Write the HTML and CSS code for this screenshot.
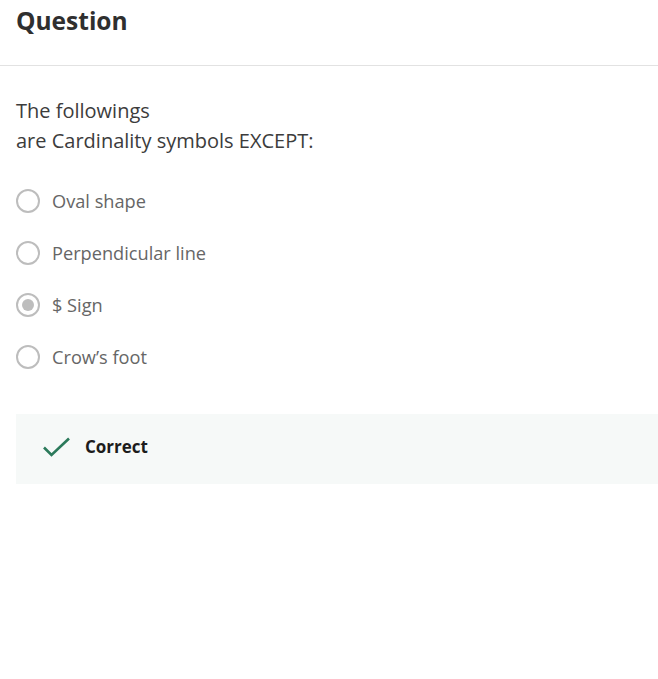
FILE: index.html
```html
<!DOCTYPE html>
<html>
<head>
<meta charset="utf-8">
<link rel="stylesheet" href="styles.css">
</head>
<body>
<header class="header">
  <h1 class="title">Question</h1>
</header>
<main class="content">
  <p class="prompt">The followings<br>are Cardinality symbols EXCEPT:</p>
  <ul class="options">
    <li class="option"><span class="radio"></span><span class="label">Oval shape</span></li>
    <li class="option"><span class="radio"></span><span class="label">Perpendicular line</span></li>
    <li class="option"><span class="radio checked"></span><span class="label">$ Sign</span></li>
    <li class="option"><span class="radio"></span><span class="label">Crow’s foot</span></li>
  </ul>
  <div class="feedback">
    <svg class="check" width="28" height="20" viewBox="0 0 28 20"><path d="M1 10.5 L8.5 18 L26 1.5" fill="none" stroke="#2b7a5b" stroke-width="2.6"/></svg>
    <span class="feedback-text">Correct</span>
  </div>
</main>
</body>
</html>
```
FILE: styles.css
```css
* { box-sizing: border-box; }
html, body { margin: 0; padding: 0; background: #fff; }
body {
  font-family: "Open Sans", "Noto Sans", sans-serif;
  color: #333;
  width: 658px;
  overflow: hidden;
}
.header {
  height: 66px;
  border-bottom: 1px solid #e2e2e2;
  padding: 2px 16px 0;
}
.title {
  margin: 0;
  font-size: 24.5px;
  font-weight: 700;
  line-height: 38px;
  color: #2f2f2f;
}
.content {
  padding: 30px 0 0 16px;
}
.prompt {
  margin: 0;
  font-size: 20px;
  font-weight: 400;
  line-height: 30px;
  color: #3c3c3c;
}
.options {
  list-style: none;
  margin: 33px 0 0;
  padding: 0;
  display: flex;
  flex-direction: column;
  gap: 28px;
}
.option {
  display: flex;
  align-items: center;
  height: 24px;
  gap: 12px;
}
.radio {
  width: 24px;
  height: 24px;
  border: 2px solid #bdbdbd;
  border-radius: 50%;
  flex: none;
  display: flex;
  align-items: center;
  justify-content: center;
}
.radio.checked::after {
  content: "";
  width: 12px;
  height: 12px;
  border-radius: 50%;
  background: #bdbdbd;
}
.label {
  font-size: 18.2px;
  font-weight: 400;
  color: #666;
  line-height: 24px;
}
.feedback {
  margin-top: 45px;
  height: 70px;
  background: #f6f9f8;
  display: flex;
  align-items: center;
  padding: 0 0 5px 27px;
  gap: 14px;
}
.check { flex: none; margin-top: 1px; }
.feedback-text {
  font-size: 17px;
  font-weight: 700;
  color: #1c1c1c;
}
```
